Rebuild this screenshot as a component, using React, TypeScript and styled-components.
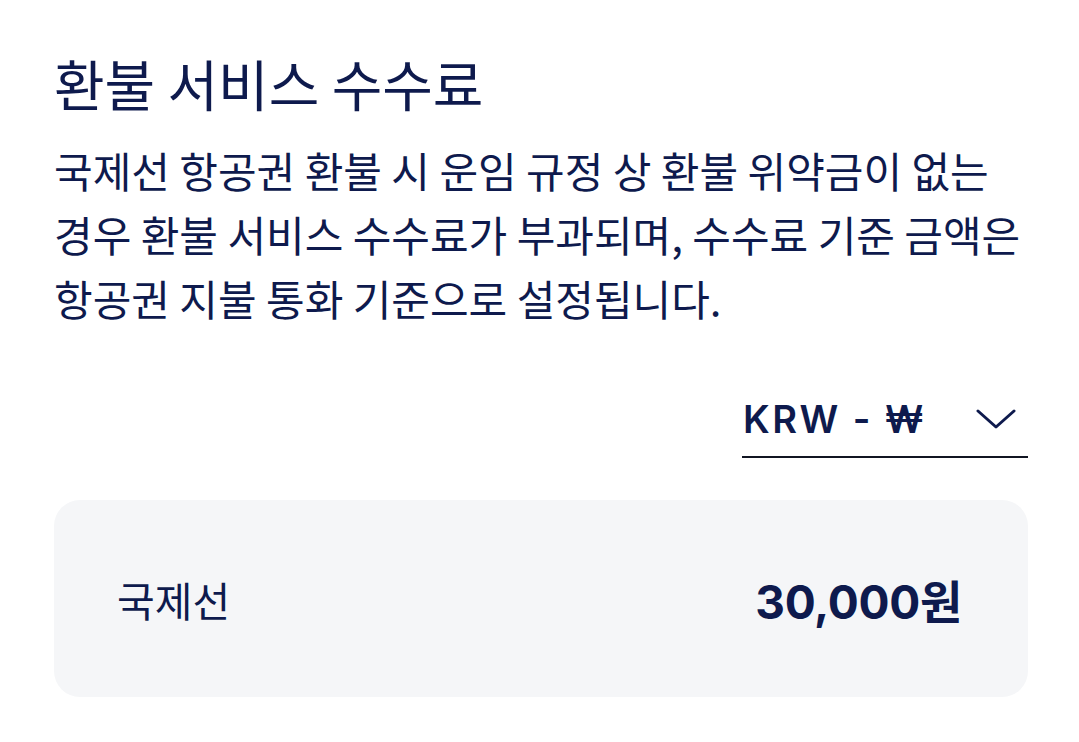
import styled, { createGlobalStyle } from "styled-components"

const NAVY = "#0e1a4d"

const GlobalStyle = createGlobalStyle`
  html, body {
    margin: 0;
    padding: 0;
    background: #ffffff;
  }
  body {
    font-family: "Noto Sans CJK KR", "Noto Sans", sans-serif;
    color: ${NAVY};
  }
`

// 환불 서비스 수수료 안내 섹션
const RefundFeeSection = () => {
  return (
    <Section>
      <Title>환불 서비스 수수료</Title>
      <Description>
        국제선 항공권 환불 시 운임 규정 상 환불 위약금이 없는
        <br />
        경우 환불 서비스 수수료가 부과되며, 수수료 기준 금액은
        <br />
        항공권 지불 통화 기준으로 설정됩니다.
      </Description>
      <SelectRow>
        <CurrencySelect type="button">
          <CurrencyLabel>KRW - ₩</CurrencyLabel>
          <Chevron width="40" height="22" viewBox="0 0 40 22" aria-hidden>
            <path
              d="M2 3 L20 19 L38 3"
              fill="none"
              stroke={NAVY}
              strokeWidth="3"
              strokeLinecap="round"
              strokeLinejoin="round"
            />
          </Chevron>
        </CurrencySelect>
      </SelectRow>
      <FeeCard>
        <FeeLabel>국제선</FeeLabel>
        <FeeAmount>30,000원</FeeAmount>
      </FeeCard>
    </Section>
  )
}

const App = () => (
  <>
    <GlobalStyle />
    <RefundFeeSection />
  </>
)

export default App

const Section = styled.section`
  display: flex;
  flex-direction: column;
  padding: 47px 51px 0 54px;
  width: 1079px;
  box-sizing: border-box;
`

const Title = styled.h2`
  margin: 0;
  font-size: 55px;
  font-weight: 400;
  line-height: 70px;
`

const Description = styled.p`
  margin: 21px 0 0;
  font-size: 42px;
  font-weight: 400;
  line-height: 64px;
`

const SelectRow = styled.div`
  display: flex;
  justify-content: flex-end;
  margin-top: 56px;
`

const CurrencySelect = styled.button`
  display: flex;
  align-items: center;
  justify-content: space-between;
  width: 286px;
  height: 72px;
  padding: 0 12px 4px 1px;
  box-sizing: border-box;
  background: none;
  border: none;
  border-bottom: 2px solid #111522;
  color: ${NAVY};
  cursor: pointer;
`

const CurrencyLabel = styled.span`
  font-family: Inter, "Noto Sans", "Noto Sans CJK KR", sans-serif;
  font-size: 38px;
  font-weight: 600;
  letter-spacing: 2.5px;
`

const Chevron = styled.svg`
  display: block;
`

const FeeCard = styled.div`
  display: flex;
  align-items: center;
  justify-content: space-between;
  margin-top: 42px;
  height: 197px;
  padding: 0 66px 0 63px;
  border-radius: 26px;
  background: #f5f6f8;
`

const FeeLabel = styled.span`
  font-size: 41px;
  font-weight: 400;
`

const FeeAmount = styled.span`
  font-family: Inter, "Noto Sans CJK KR", sans-serif;
  font-size: 46px;
  font-weight: 700;
  letter-spacing: -0.3px;
`
